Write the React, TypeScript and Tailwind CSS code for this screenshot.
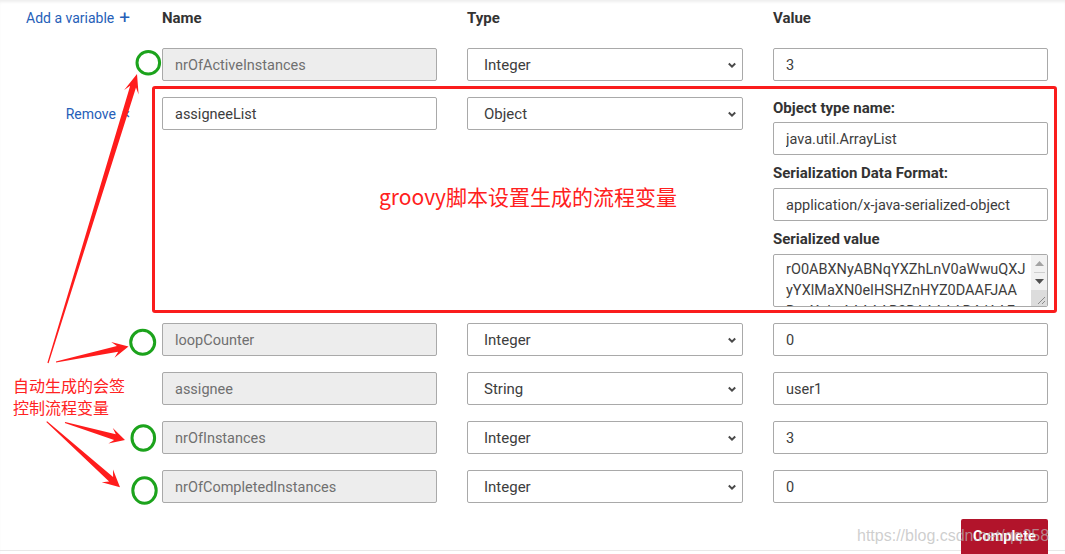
import React from "react";

type Row = { name: string; type: string; value: string; locked: boolean };

const rowsTop: Row[] = [{ name: "nrOfActiveInstances", type: "Integer", value: "3", locked: true }];
const rowsBottom: Row[] = [
  { name: "loopCounter", type: "Integer", value: "0", locked: true },
  { name: "assignee", type: "String", value: "user1", locked: true },
  { name: "nrOfInstances", type: "Integer", value: "3", locked: true },
  { name: "nrOfCompletedInstances", type: "Integer", value: "0", locked: true },
];

function TextBox({ value, locked, extra = "" }: { value: string; locked?: boolean; extra?: string }) {
  return (
    <input
      readOnly
      defaultValue={value}
      className={
        (locked
          ? "bg-[#ededed] text-[#707070] "
          : "bg-white text-[#3d3d3d] ") +
        "h-[33px] w-[275px] shrink-0 rounded-[2px] border border-[#a9a9a9] px-[12px] pt-px text-[14.5px] outline-none " +
        extra
      }
    />
  );
}

function SelectBox({ value }: { value: string }) {
  return (
    <div className="relative h-[33px] w-[276px] shrink-0">
      <select
        defaultValue={value}
        className="h-full w-full appearance-none rounded-[2px] border border-[#a9a9a9] bg-white pl-[16px] pt-[2px] text-[15px] text-[#3d3d3d] outline-none"
      >
        <option>Boolean</option>
        <option>Integer</option>
        <option>String</option>
        <option>Object</option>
      </select>
      <svg className="pointer-events-none absolute right-[6px] top-[14px]" width="10" height="7" viewBox="0 0 10 7">
        <path d="M1.8 1.5 L5 4.7 L8.2 1.5" fill="none" stroke="#4a4a4a" strokeWidth="2" />
      </svg>
    </div>
  );
}

function VarRow({ r }: { r: Row }) {
  return (
    <div className="flex h-[33px] gap-[30px]">
      <div className="w-[132px] shrink-0" />
      <TextBox value={r.name} locked={r.locked} />
      <SelectBox value={r.type} />
      <TextBox value={r.value} />
    </div>
  );
}

function arrowPoints(tx: number, ty: number, px: number, py: number, h: number, w: number, s = 3) {
  const dx = px - tx;
  const dy = py - ty;
  const L = Math.hypot(dx, dy);
  const ux = dx / L;
  const uy = dy / L;
  const nx = -uy;
  const ny = ux;
  const bx = px - ux * h;
  const by = py - uy * h;
  const kx = px - ux * h * 0.7;
  const ky = py - uy * h * 0.7;
  const pts = [
    [tx + nx * 0.6, ty + ny * 0.6],
    [kx + nx * s, ky + ny * s],
    [bx + nx * w, by + ny * w],
    [px, py],
    [bx - nx * w, by - ny * w],
    [kx - nx * s, ky - ny * s],
    [tx - nx * 0.6, ty - ny * 0.6],
  ];
  return pts.map((p) => p[0].toFixed(1) + "," + p[1].toFixed(1)).join(" ");
}

export default function App() {
  return (
    <div className="relative h-[554px] w-[1065px] overflow-hidden bg-white font-['Roboto',sans-serif] shadow-[inset_0_3px_3px_-1px_rgba(0,0,0,0.07)]">
      <div className="flex flex-col pt-[8px]">
        {/* header */}
        <div className="flex h-[20px] gap-[30px] leading-[20px]">
          <div className="flex w-[132px] shrink-0 items-center pl-[26px] text-[14px] text-[#2660b8]">
            <span>Add a variable</span>
            <span className="ml-[5px] text-[19px] leading-[20px]">+</span>
          </div>
          <div className="w-[275px] shrink-0 text-[15px] font-bold text-[#333]">Name</div>
          <div className="w-[276px] shrink-0 text-[15px] font-bold text-[#333]">Type</div>
          <div className="w-[275px] shrink-0 text-[15px] font-bold text-[#333]">Value</div>
        </div>

        <div className="mt-[20px] flex flex-col gap-[16px]">
          {rowsTop.map((r) => (
            <VarRow key={r.name} r={r} />
          ))}

          {/* object row */}
          <div className="flex items-start gap-[30px]">
            <div className="flex h-[33px] w-[132px] shrink-0 items-center justify-end pr-[2px] pt-[2px] text-[14px] text-[#2660b8]">
              <span>Remove</span>
              <span className="ml-[6px] text-[15px]">×</span>
            </div>
            <TextBox value="assigneeList" />
            <SelectBox value="Object" />
            <div className="flex w-[275px] shrink-0 flex-col">
              <div className="h-[20px] pt-px text-[15px] font-bold leading-[20px] text-[#333]">Object type name:</div>
              <TextBox value="java.util.ArrayList" extra="mt-[5px]" />
              <div className="mt-[7px] h-[20px] pt-px text-[15px] font-bold leading-[20px] text-[#333]">Serialization Data Format:</div>
              <TextBox value="application/x-java-serialized-object" extra="mt-[6px]" />
              <div className="mt-[7px] h-[20px] pt-px text-[15px] font-bold leading-[20px] text-[#333]">Serialized value</div>
              <div className="relative mt-[6px] h-[53px] overflow-hidden rounded-[2px] border border-[#a9a9a9] bg-white">
                <div className="whitespace-pre pl-[12px] pr-[18px] pt-[4px] text-[14.5px] leading-[21px] text-[#3d3d3d]">
                  {"rO0ABXNyABNqYXZhLnV0aWwuQXJ\nyYXlMaXN0eIHSHZnHYZ0DAAFJAA\nRzaXplwAAAAAB3BAAAAAB4dAAF"}
                </div>
                <div className="absolute bottom-0 right-0 top-0 flex w-[16px] flex-col bg-[#f1f1f1]">
                  <div className="flex h-[17px] items-center justify-center">
                    <svg width="9" height="5" viewBox="0 0 9 5">
                      <path d="M0 5 L4.5 0 L9 5 Z" fill="#a3a3a3" />
                    </svg>
                  </div>
                  <div className="mx-auto h-px w-[11px] bg-[#cfcfcf]" />
                  <div className="flex h-[17px] items-center justify-center">
                    <svg width="9" height="5" viewBox="0 0 9 5">
                      <path d="M0 0 L9 0 L4.5 5 Z" fill="#505050" />
                    </svg>
                  </div>
                  <div className="relative flex-1 bg-[#dcdcdc]">
                    <svg className="absolute bottom-[1px] right-[1px]" width="9" height="9" viewBox="0 0 9 9">
                      <path d="M1 8 L8 1 M5 8 L8 5" stroke="#8a8a8a" strokeWidth="1" />
                    </svg>
                  </div>
                </div>
              </div>
            </div>
          </div>

          {rowsBottom.map((r) => (
            <VarRow key={r.name} r={r} />
          ))}
        </div>

        <div className="relative z-10 mt-[16px] flex justify-end pr-[17px]">
          <button className="flex h-[35px] w-[87px] items-center justify-center rounded-t-[2px] bg-[#b2142b] text-[14.5px] font-bold text-white">
            Complete
          </button>
        </div>
      </div>

      {/* bottom rule */}
      <div className="absolute left-0 right-0 top-[550px] h-px bg-[#e8e8e8]" />

      {/* annotation: red box */}
      <div className="pointer-events-none absolute left-[152px] top-[86px] h-[227px] w-[905px] rounded-[3px] border-[3px] border-[#fa1c1c]" />
      <div className="pointer-events-none absolute left-[379px] top-[182px] font-['Noto_Sans_CJK_SC',sans-serif] text-[21px] leading-[28px] text-[#ff2020]">
        groovy脚本设置生成的流程变量
      </div>
      <div className="pointer-events-none absolute left-[13px] top-[374px] font-['Noto_Sans_CJK_SC',sans-serif] text-[16px] leading-[22px] text-[#ff2222]">
        <div>自动生成的会签</div>
        <div>控制流程变量</div>
      </div>

      {/* annotation: circles and arrows */}
      <svg className="pointer-events-none absolute left-0 top-0" width="1065" height="554" viewBox="0 0 1065 554">
        <g fill="none" stroke="#1ca31c" strokeWidth="3">
          <ellipse cx="148.3" cy="62.8" rx="11.3" ry="11.3" />
          <ellipse cx="142.7" cy="342.3" rx="12" ry="12" />
          <ellipse cx="143.3" cy="438" rx="11.3" ry="12.3" />
          <ellipse cx="144.5" cy="490.5" rx="11.7" ry="12.7" />
        </g>
        <g fill="#ff1c1c">
          <polygon points={arrowPoints(48, 363, 137, 74, 19, 7.5, 3)} />
          <polygon points={arrowPoints(56, 362, 128.5, 346.5, 16, 8, 3)} />
          <polygon points={arrowPoints(65, 422.5, 125, 440, 15, 8, 3)} />
          <polygon points={arrowPoints(46.7, 421.7, 120, 487.3, 17, 8.5, 3)} />
        </g>
      </svg>

      {/* watermark */}
      <div className="pointer-events-none absolute left-[857px] top-[524px] z-20 font-['Liberation_Sans',sans-serif] text-[16px] leading-[24px] text-[rgba(185,185,185,0.7)]">
        https://blog.csdn.net/qq258
      </div>
    </div>
  );
}
